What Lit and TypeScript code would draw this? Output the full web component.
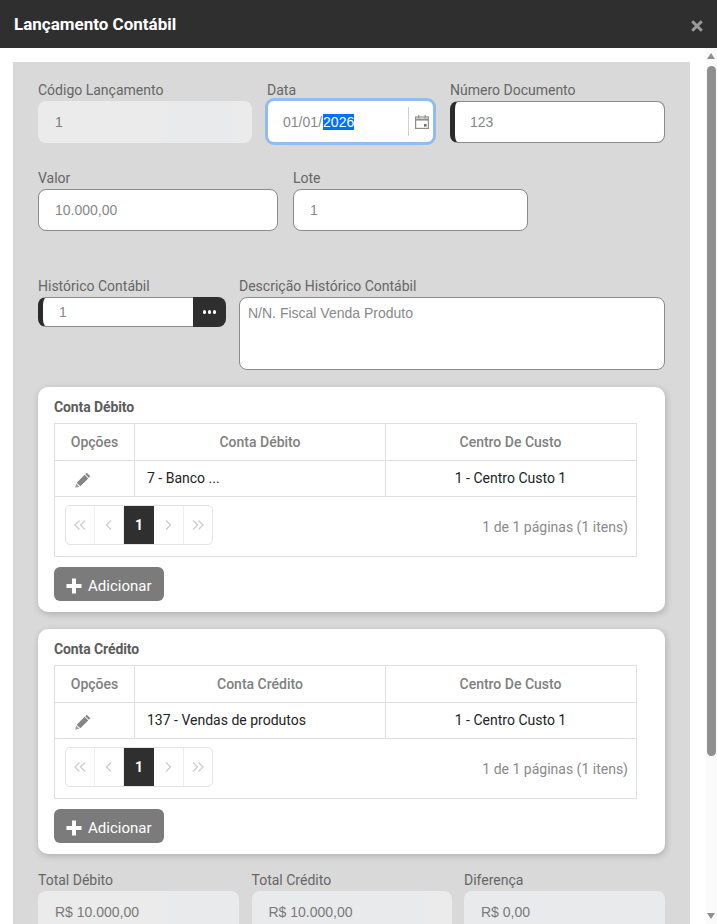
import { LitElement, html, css } from "lit";
import { customElement } from "lit/decorators.js";

const pencil = html`<svg class="pencil" viewBox="0 0 15 15" width="16" height="16"><path fill="#858585" d="M11 .6 14.4 4 13 5.4 9.6 2ZM9 2.6 12.4 6 5 13.4 1.6 10Z"/><path fill="#a0a0a0" d="M1.1 10.8 4.2 13.9 .2 14.8Z"/></svg>`;
const plus = html`<svg viewBox="0 0 16 16" width="16" height="16"><path fill="#fff" d="M6 0.5h4v5.5h5.5v4H10v5.5H6V10H0.5V6H6z"/></svg>`;
const cal = html`<svg viewBox="0 0 16 16" width="16" height="16"><g fill="none" stroke="#8f8f88" stroke-width="1.2"><rect x="1.6" y="3" width="12.8" height="11.4"/><path d="M1.6 5.6h12.8" stroke-width="2"/><path d="M4.8 1v3.4M11.2 1v3.4"/></g><rect x="10" y="10" width="2.6" height="2.6" fill="#6f6f6f"/></svg>`;
const chev = (d: string) => html`<svg viewBox="0 0 14 14" width="14" height="14"><path fill="none" stroke="#cfcfcf" stroke-width="1.4" d=${d}/></svg>`;

@customElement("app-root")
export class AppRoot extends LitElement {
  static styles = css`
    :host { display: block; width: 717px; height: 924px; overflow: hidden; background: #fff; font-family: Roboto, "Liberation Sans", sans-serif; font-size: 14px; color: #666; position: relative; }
    * { box-sizing: border-box; }
    header { height: 48px; background: #2f2f2f; color: #fff; font-weight: 700; font-size: 17px; line-height: 48px; padding-left: 14px; position: relative; }
    .close { position: absolute; left: 691px; top: 20px; }
    .body { display: flex; padding: 14px 0 0 13px; height: 876px; overflow: hidden; }
    .panel { width: 677px; flex: none; height: 900px; background: #d9d9d9; padding: 19px 25px 0; }
    .row { display: grid; column-gap: 15px; }
    .r1 { grid-template-columns: 214px 168px 215px; height: 88px; }
    .r2 { grid-template-columns: 240px 235px; height: 108px; }
    .r3 { grid-template-columns: 188px 426px; column-gap: 13px; height: 90px; }
    .r4 { grid-template-columns: 201px 200px 201px; column-gap: 12.5px; margin-top: 17px; }
    .gap { height: 20px; }
    label { display: block; height: 20px; line-height: 18px; white-space: nowrap; }
    .input { height: 42px; border: 1px solid #8a8a8a; border-radius: 8px; background: #fff; color: #888; padding-left: 16px; line-height: 41px; font-family: "Liberation Sans", Arial, sans-serif; }
    .ro { border: 0; padding-left: 17px; line-height: 42px; color: #7a7a7a; }
    .ro1 { background: linear-gradient(90deg, #ebebeb 129px, #e8eaec 129px, #e8eaec 193px, #ebebeb 193px); }
    .ro2 { background: linear-gradient(90deg, #ebebeb 129px, #e8eaec 129px); }
    .ro3 { background: linear-gradient(90deg, #e8eaec 171px, #ebebeb 171px); }
    .ro4 { background: #e8eaec; }
    .left { border-left: 5px solid #2b2b2b; padding-left: 15px; }
    .date { display: flex; align-items: center; height: 41px; margin: 0 2px 0 1px; border: 0; box-shadow: 0 0 0 3px #90bded; border-radius: 6px; padding-left: 15px; line-height: 20px; }
    .date .val { flex: 1; letter-spacing: 0.02px; }
    .sel { background: #0070f5; color: #fff; margin-left: 1px; }
    .cal { width: 25px; height: 29px; border-left: 1px solid #d0d0d0; display: flex; align-items: center; justify-content: center; padding-left: 2px; }
    .group { display: flex; height: 30px; }
    .group .input { flex: 1; height: 30px; line-height: 29px; border-right: 0; border-radius: 8px 0 0 8px; padding-left: 16px; }
    .dots { width: 33px; background: #2f2f2f; border-radius: 0 8px 8px 0; display: flex; align-items: center; justify-content: center; gap: 1.5px; }
    .dots i { width: 3.5px; height: 3.5px; border-radius: 50%; background: #fff; }
    .area { height: 73px; line-height: 16px; padding: 7px 8px; }
    .card { background: #fff; border-radius: 10px; box-shadow: 1px 2px 7px rgba(0,0,0,.2); padding: 11px 16px 0; height: 225px; margin-bottom: 17px; }
    .card h3 { margin: 0; font-size: 14px; line-height: 18px; font-weight: 700; color: #5c5c5c; height: 25px; letter-spacing: -.1px; }
    .table { width: 583px; border: 1px solid #dedee6; height: 134px; }
    .tr { display: grid; grid-template-columns: 80px 251px 249px; border-bottom: 1px solid #dedee6; }
    .tr > div { display: flex; align-items: center; justify-content: center; border-right: 1px solid #dedee6; }
    .tr > div:last-child { border-right: 0; }
    .th { height: 37px; font-weight: 500; color: #808080; }
    .td { height: 36px; color: #222; }
    .td > div { padding-bottom: 1px; }
    .td > div.l { justify-content: flex-start; padding-left: 12px; }
    .td > div.p { justify-content: flex-start; padding: 3px 0 0 20px; }
    .pager { height: 59px; display: flex; align-items: center; justify-content: space-between; padding: 0 8px 0 10px; color: #8a8a8a; }
    .pages { display: flex; width: 148px; height: 40px; margin-top: -3px; border: 1px solid #e4e4e8; border-radius: 5px; overflow: hidden; }
    .pages > div { flex: 1; display: flex; align-items: center; justify-content: center; border-right: 1px solid #eee; }
    .pages > div:last-child { border-right: 0; }
    .pages > div:nth-child(-n+2) { flex: none; width: 29px; }
    .pages .cur { flex: none; background: #2f2f2f; color: #fff; font-weight: 700; font-size: 14px; border: 0; width: 30px; }
    .add { margin-top: 10px; width: 110px; height: 34px; background: #7b7b7b; border-radius: 6px; color: #fff; font-size: 15px; display: flex; align-items: center; padding: 3px 0 0 12px; gap: 6px; }
    .sb { flex: 1; position: relative; margin-left: 16px; margin-top: -14px; background: #fafafa; width: 11px; }
    .thumb { position: absolute; left: 1px; top: 18px; width: 9px; height: 690px; background: #8f8f8f; border-radius: 5px; }
    .up, .down { position: absolute; left: 1px; width: 0; height: 0; border-left: 4.5px solid transparent; border-right: 4.5px solid transparent; }
    .up { top: 5px; border-bottom: 6px solid #8f8f8f; }
    .down { top: 865px; border-top: 6px solid #8f8f8f; }
  `;

  card(title: string, conta: string) {
    return html`<section class="card">
      <h3>${title}</h3>
      <div class="table">
        <div class="tr th"><div>Opções</div><div>${title}</div><div>Centro De Custo</div></div>
        <div class="tr td"><div class="p">${pencil}</div><div class="l">${conta}</div><div>1 - Centro Custo 1</div></div>
        <div class="pager">
          <div class="pages">
            <div>${chev("M6.5 2.5 2 7l4.5 4.5M12 2.5 7.5 7l4.5 4.5")}</div>
            <div>${chev("M9 2.5 4.5 7 9 11.5")}</div>
            <div class="cur">1</div>
            <div>${chev("M5 2.5 9.5 7 5 11.5")}</div>
            <div>${chev("M2 2.5 6.5 7 2 11.5M7.5 2.5 12 7l-4.5 4.5")}</div>
          </div>
          <span>1 de 1 páginas (1 itens)</span>
        </div>
      </div>
      <div class="add">${plus}<span>Adicionar</span></div>
    </section>`;
  }

  render() {
    return html`
      <header>Lançamento Contábil
        <svg class="close" viewBox="0 0 12 12" width="12" height="12"><path stroke="#9a9a9a" stroke-width="3" d="M1.2 1.2 10.8 10.8M10.8 1.2 1.2 10.8"/></svg>
      </header>
      <div class="body">
        <div class="panel">
          <div class="row r1">
            <div><label>Código Lançamento</label><div class="input ro ro1">1</div></div>
            <div><label>Data</label><div class="input date"><span class="val">01/01/<span class="sel">2026</span></span><span class="cal">${cal}</span></div></div>
            <div><label>Número Documento</label><div class="input left">123</div></div>
          </div>
          <div class="row r2">
            <div><label>Valor</label><div class="input">10.000,00</div></div>
            <div><label>Lote</label><div class="input">1</div></div>
          </div>
          <div class="row r3">
            <div><label>Histórico Contábil</label><div class="group"><div class="input left">1</div><div class="dots"><i></i><i></i><i></i></div></div></div>
            <div><label>Descrição Histórico Contábil</label><div class="input area">N/N. Fiscal Venda Produto</div></div>
          </div>
          <div class="gap"></div>
          ${this.card("Conta Débito", "7 - Banco ...")}
          ${this.card("Conta Crédito", "137 - Vendas de produtos")}
          <div class="row r4">
            <div><label>Total Débito</label><div class="input ro ro2">R$ 10.000,00</div></div>
            <div><label>Total Crédito</label><div class="input ro ro3">R$ 10.000,00</div></div>
            <div><label>Diferença</label><div class="input ro ro4">R$ 0,00</div></div>
          </div>
        </div>
        <div class="sb"><div class="up"></div><div class="thumb"></div><div class="down"></div></div>
      </div>`;
  }
}
